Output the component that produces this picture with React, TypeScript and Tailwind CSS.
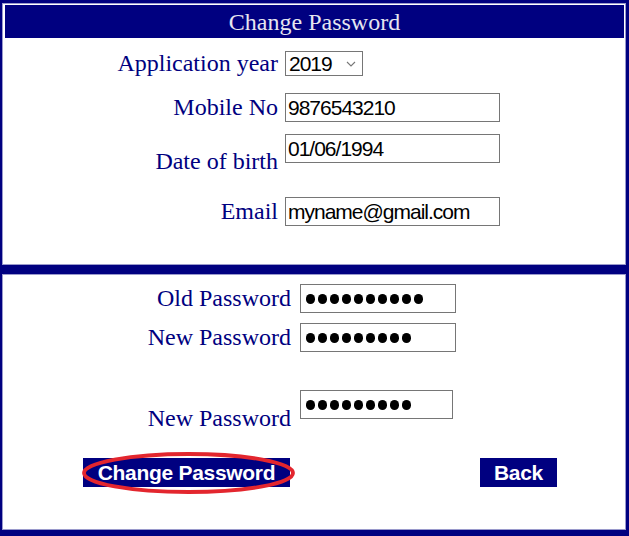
import React from 'react';

const serif = { fontFamily: '"Liberation Serif", "Times New Roman", serif' };
const sans = { fontFamily: '"Liberation Sans", Arial, sans-serif' };

const Bullets: React.FC<{ count: number }> = ({ count }) => (
  <div className="flex items-center gap-[3px] pl-[5px]">
    {Array.from({ length: count }).map((_, i) => (
      <span key={i} className="block w-[9px] h-[10px] rounded-full bg-black" />
    ))}
  </div>
);

const TextBox: React.FC<{ value: string }> = ({ value }) => (
  <input
    readOnly
    value={value}
    style={sans}
    className="w-[215px] h-[29px] border border-[#767676] bg-white px-[2px] text-[21px] tracking-[-1px] text-black outline-none"
  />
);

const PasswordBox: React.FC<{ count: number; width: string }> = ({ count, width }) => (
  <div className={`${width} h-[29px] border border-[#767676] bg-white flex items-center`}>
    <Bullets count={count} />
  </div>
);

export default function App() {
  return (
    <div className="w-[629px] h-[536px] bg-[#000080] pt-[3px] pl-[2px] pr-[3px] pb-[6px] flex flex-col gap-[9px]">
      {/* personal details */}
      <div className="h-[262px] bg-white border border-[#9a9acc] pl-[2px] pr-[1px] pt-[1px]">
        <div
          style={serif}
          className="h-[33px] bg-[#000080] text-[#e6e6f0] text-[24px] leading-[34px] text-center"
        >
          Change Password
        </div>

        <div style={serif} className="text-[24px] leading-[27px] text-[#000080]">
          <div className="mt-[12px] flex items-center gap-[7px]">
            <span className="w-[273px] text-right">Application year</span>
            <div
              style={sans}
              className="w-[78px] h-[25px] border border-[#767676] flex items-center justify-between pl-[3px] pr-[6px] text-[21px] tracking-[-1px] text-black"
            >
              <span>2019</span>
              <svg width="10" height="6" viewBox="0 0 10 6">
                <path d="M1 1l4 4 4-4" fill="none" stroke="#777" strokeWidth="1.1" />
              </svg>
            </div>
          </div>

          <div className="mt-[16px] flex items-center gap-[7px]">
            <span className="w-[273px] text-right">Mobile No</span>
            <TextBox value="9876543210" />
          </div>

          <div className="mt-[12px] h-[41px] flex items-end gap-[7px]">
            <span className="w-[273px] text-right">Date of birth</span>
            <div className="self-start">
              <TextBox value="01/06/1994" />
            </div>
          </div>

          <div className="mt-[22px] flex items-center gap-[7px]">
            <span className="w-[273px] text-right">Email</span>
            <TextBox value="myname@gmail.com" />
          </div>
        </div>
      </div>

      {/* passwords */}
      <div className="flex-1 bg-white border border-[#9a9acc] pl-[2px] pr-[1px]">
        <div style={serif} className="text-[24px] leading-[27px] text-[#000080]">
          <div className="mt-[9px] flex items-center gap-[9px]">
            <span className="w-[286px] text-right">Old Password</span>
            <PasswordBox count={10} width="w-[156px]" />
          </div>

          <div className="mt-[10px] flex items-center gap-[9px]">
            <span className="w-[286px] text-right">New Password</span>
            <PasswordBox count={9} width="w-[156px]" />
          </div>

          <div className="mt-[38px] h-[42px] flex items-end gap-[9px]">
            <span className="w-[286px] text-right">New Password</span>
            <div className="self-start">
              <PasswordBox count={9} width="w-[153px]" />
            </div>
          </div>
        </div>

        <div style={sans} className="mt-[26px] pl-[78px] flex gap-[190px]">
          <div className="relative">
            <button className="w-[207px] h-[29px] bg-[#000080] text-white text-[21px] tracking-[-0.3px] font-bold leading-[29px]">
              Change Password
            </button>
            <svg
              className="absolute left-[-1px] top-[-6px]"
              width="213"
              height="42"
              viewBox="0 0 213 42"
            >
              <ellipse cx="106.5" cy="21" rx="104.5" ry="19" fill="none" stroke="#e3262e" strokeWidth="3.8" />
            </svg>
          </div>
          <button className="w-[77px] h-[29px] bg-[#000080] text-white text-[21px] tracking-[-0.3px] font-bold leading-[29px]">
            Back
          </button>
        </div>
      </div>
    </div>
  );
}
